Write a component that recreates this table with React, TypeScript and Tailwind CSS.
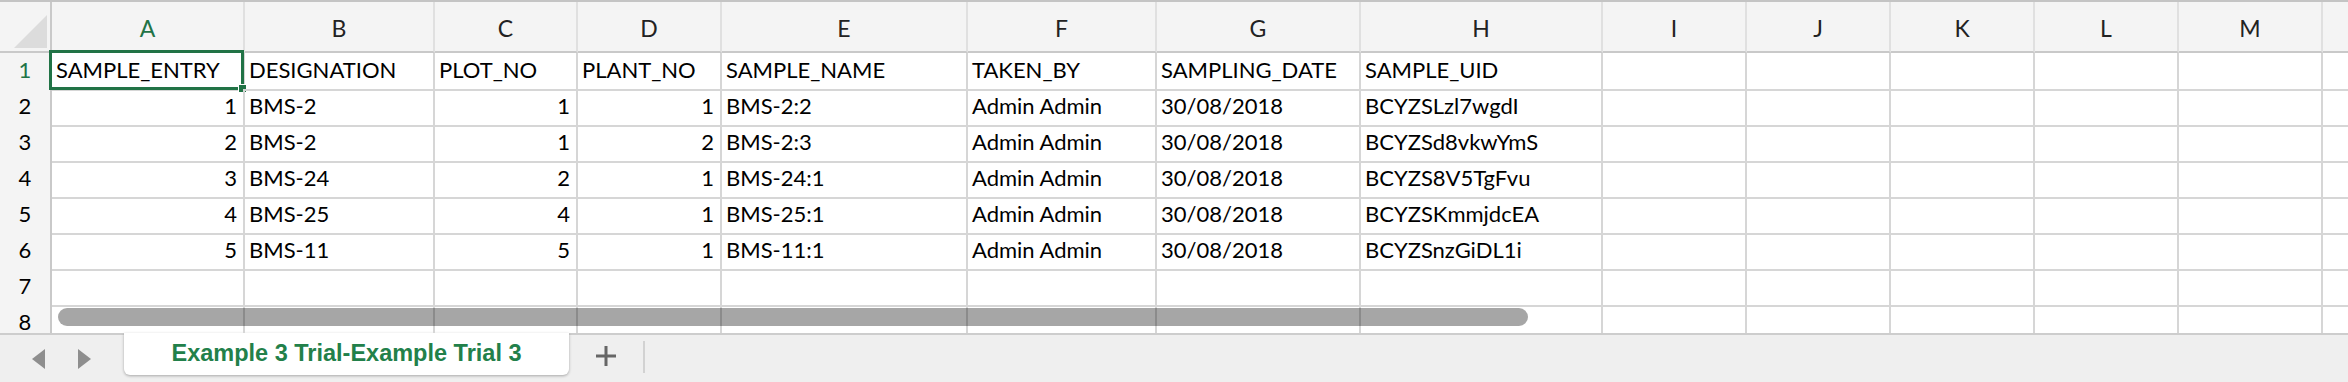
import React from 'react';

const widths = 'grid-cols-[52px_193px_190px_143px_144px_246px_189px_204px_242px_144px_144px_144px_144px_144px_1fr]';
const letters = ['A', 'B', 'C', 'D', 'E', 'F', 'G', 'H', 'I', 'J', 'K', 'L', 'M', ''];

type Cell = { v: string; num?: boolean };

const head = ['SAMPLE_ENTRY', 'DESIGNATION', 'PLOT_NO', 'PLANT_NO', 'SAMPLE_NAME', 'TAKEN_BY', 'SAMPLING_DATE', 'SAMPLE_UID'];

const rows: Cell[][] = [
  head.map((v) => ({ v })),
  ...[
    ['1', 'BMS-2', '1', '1', 'BMS-2:2', 'BCYZSLzl7wgdI'],
    ['2', 'BMS-2', '1', '2', 'BMS-2:3', 'BCYZSd8vkwYmS'],
    ['3', 'BMS-24', '2', '1', 'BMS-24:1', 'BCYZS8V5TgFvu'],
    ['4', 'BMS-25', '4', '1', 'BMS-25:1', 'BCYZSKmmjdcEA'],
    ['5', 'BMS-11', '5', '1', 'BMS-11:1', 'BCYZSnzGiDL1i'],
  ].map((r) => [
    { v: r[0], num: true },
    { v: r[1] },
    { v: r[2], num: true },
    { v: r[3], num: true },
    { v: r[4] },
    { v: 'Admin Admin' },
    { v: '30/08/2018' },
    { v: r[5] },
  ]),
  [],
  [],
];

export default function App() {
  return (
    <div className="w-[2348px] h-[382px] overflow-hidden bg-white text-black font-['Lato',sans-serif]">
      <div className="relative h-[333px] overflow-hidden">
        {/* column headers */}
        <div className={`grid ${widths} h-[53px] border-t-2 border-[#c4c4c4] bg-[#f4f4f4]`}>
          <div className="relative border-r-2 border-b-2 border-[#c9c9c9]">
            <svg className="absolute left-[14px] top-[13px]" width="33" height="33" viewBox="0 0 33 33">
              <polygon points="33,0 33,33 0,33" fill="#dcdcdc" />
            </svg>
          </div>
          {letters.map((l, i) => (
            <div
              key={i}
              className={`flex items-end justify-center pb-[6px] text-[23px] border-b-2 border-[#c9c9c9] ${
                i < 13 ? 'border-r-2 border-r-[#e0e0e0]' : ''
              } ${i === 0 ? 'text-[#217346]' : 'text-[#222]'}`}
            >
              {l}
            </div>
          ))}
        </div>

        {/* rows */}
        {rows.map((r, ri) => (
          <div key={ri} className={`grid ${widths} h-[36px]`}>
            <div
              className={`flex items-end justify-center pb-[3px] text-[22px] bg-[#f4f4f4] border-r-2 border-[#c9c9c9] border-b-2 border-b-[#dcdcdc] ${
                ri === 0 ? 'text-[#217346]' : 'text-black'
              }`}
            >
              {ri + 1}
            </div>
            {letters.map((_, ci) => {
              const c = r[ci];
              return (
                <div
                  key={ci}
                  className={`relative flex items-end pb-[3px] text-[22px] whitespace-nowrap border-b-2 border-[#d6d6d6] ${
                    ci < 13 ? 'border-r-2' : ''
                  } ${c?.num ? 'justify-end pr-[6px]' : 'pl-[4px]'}`}
                >
                  {c?.v}
                  {ri === 0 && ci === 0 && (
                    <div className="absolute -left-[3px] -top-[3px] -right-[1px] -bottom-[1px] border-[3px] border-[#217346]">
                      <div className="absolute -right-[6px] -bottom-[6px] w-[9px] h-[9px] bg-[#217346] border border-white" />
                    </div>
                  )}
                </div>
              );
            })}
          </div>
        ))}

        {/* horizontal scrollbar */}
        <div className="absolute left-[58px] top-[308px] w-[1470px] h-[18px] rounded-full bg-black/35" />
      </div>

      {/* sheet tabs */}
      <div className="flex h-[49px] bg-[#efefef] border-t-2 border-[#cdcdcd]">
        <div className="flex items-center w-[124px] pl-[32px] gap-[33px]">
          <svg width="13" height="20" viewBox="0 0 13 20">
            <polygon points="13,0 13,20 0,10" fill="#8e8e8e" />
          </svg>
          <svg width="13" height="20" viewBox="0 0 13 20">
            <polygon points="0,0 0,20 13,10" fill="#8e8e8e" />
          </svg>
        </div>
        <div className="w-[445px] h-[42px] -mt-[2px] flex items-center justify-center bg-white rounded-b-[6px] shadow-[0_1px_3px_rgba(0,0,0,0.3)] font-['Liberation_Sans',Arial,sans-serif] font-bold text-[23.5px] text-[#22804a]">
          Example 3 Trial-Example Trial 3
        </div>
        <div className="flex items-center justify-center w-[74px] h-[42px]">
          <svg width="20" height="20" viewBox="0 0 20 20">
            <rect x="8.5" y="0" width="3" height="20" fill="#666" />
            <rect x="0" y="8.5" width="20" height="3" fill="#666" />
          </svg>
        </div>
        <div className="mt-[6px] h-[32px] w-[2px] bg-[#d2d2d2]" />
      </div>
    </div>
  );
}
